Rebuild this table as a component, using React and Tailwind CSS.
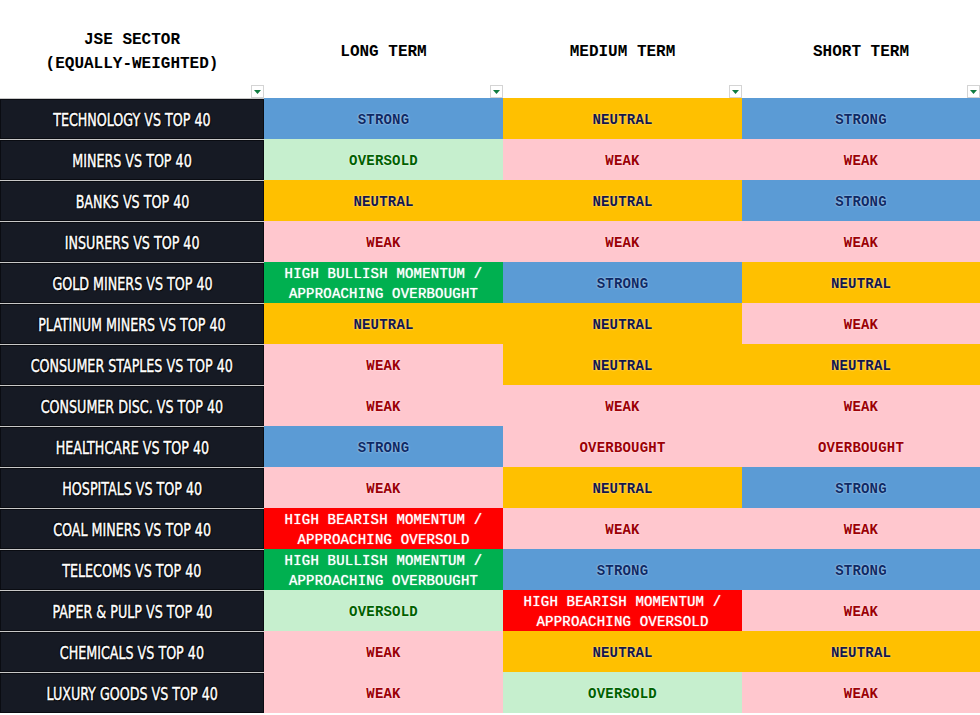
import React from 'react';

// Cell styles keyed by signal
const STYLES = {
  STRONG: 'bg-[#5b9bd5] text-[#0d2a66] font-bold [text-shadow:0_0_2px_rgba(255,255,255,0.7)]',
  NEUTRAL: 'bg-[#ffc000] text-[#15164a] font-bold [text-shadow:0_0_2px_rgba(255,255,255,0.7)]',
  WEAK: 'bg-[#ffc7ce] text-[#9c0006] font-bold [text-shadow:0_0_2px_rgba(255,255,255,0.8)]',
  OVERBOUGHT: 'bg-[#ffc7ce] text-[#9c0006] font-bold [text-shadow:0_0_2px_rgba(255,255,255,0.8)]',
  OVERSOLD: 'bg-[#c6efce] text-[#006100] font-bold [text-shadow:0_0_2px_rgba(255,255,255,0.8)]',
  BULL: 'bg-[#00b050] text-white font-normal [text-shadow:0_0_1px_rgba(255,255,255,0.9)]',
  BEAR: 'bg-[#ff0000] text-white font-normal [text-shadow:0_0_1px_rgba(255,255,255,0.9)]',
};

const LABELS = {
  BULL: ['HIGH BULLISH MOMENTUM /', 'APPROACHING OVERBOUGHT'],
  BEAR: ['HIGH BEARISH MOMENTUM /', 'APPROACHING OVERSOLD'],
};

const rows = [
  ['TECHNOLOGY VS TOP 40', 'STRONG', 'NEUTRAL', 'STRONG'],
  ['MINERS VS TOP 40', 'OVERSOLD', 'WEAK', 'WEAK'],
  ['BANKS VS TOP 40', 'NEUTRAL', 'NEUTRAL', 'STRONG'],
  ['INSURERS VS TOP 40', 'WEAK', 'WEAK', 'WEAK'],
  ['GOLD MINERS VS TOP 40', 'BULL', 'STRONG', 'NEUTRAL'],
  ['PLATINUM MINERS VS TOP 40', 'NEUTRAL', 'NEUTRAL', 'WEAK'],
  ['CONSUMER STAPLES VS TOP 40', 'WEAK', 'NEUTRAL', 'NEUTRAL'],
  ['CONSUMER DISC. VS TOP 40', 'WEAK', 'WEAK', 'WEAK'],
  ['HEALTHCARE VS TOP 40', 'STRONG', 'OVERBOUGHT', 'OVERBOUGHT'],
  ['HOSPITALS VS TOP 40', 'WEAK', 'NEUTRAL', 'STRONG'],
  ['COAL MINERS VS TOP 40', 'BEAR', 'WEAK', 'WEAK'],
  ['TELECOMS VS TOP 40', 'BULL', 'STRONG', 'STRONG'],
  ['PAPER & PULP VS TOP 40', 'OVERSOLD', 'BEAR', 'WEAK'],
  ['CHEMICALS VS TOP 40', 'WEAK', 'NEUTRAL', 'NEUTRAL'],
  ['LUXURY GOODS VS TOP 40', 'WEAK', 'OVERSOLD', 'WEAK'],
];

const mono = "font-['Liberation_Mono','DejaVu_Sans_Mono',monospace]";

const FilterButton = () => (
  <div className="absolute right-0 bottom-0 w-[13px] h-[13px] bg-white border border-[#d4d4d4] flex items-center justify-center">
    <svg width="7" height="4" viewBox="0 0 7 4">
      <polygon points="0,0 7,0 3.5,4" fill="#107c41" />
    </svg>
  </div>
);

const HeaderCell = ({ children }) => (
  <div className={`relative h-[98px] pt-[6px] flex items-center justify-center text-center text-[16px] leading-[24px] font-bold text-black ${mono}`}>
    {children}
    <FilterButton />
  </div>
);

const SignalCell = ({ value }) => {
  const lines = LABELS[value] || [value];
  return (
    <div className={`h-[41px] pt-[3px] flex flex-col items-center justify-center text-center text-[14px] leading-[20px] tracking-[0.2px] ${mono} ${STYLES[value]}`}>
      {lines.map((l) => (
        <span key={l} className="whitespace-pre">{l}</span>
      ))}
    </div>
  );
};

export default function App() {
  return (
    <div className="w-[980px] h-[715px] bg-white overflow-hidden">
      <div className="grid grid-cols-[264px_239px_239px_238px]">
        <HeaderCell>
          <div>
            JSE SECTOR
            <br />
            (EQUALLY-WEIGHTED)
          </div>
        </HeaderCell>
        <HeaderCell>LONG TERM</HeaderCell>
        <HeaderCell>MEDIUM TERM</HeaderCell>
        <HeaderCell>SHORT TERM</HeaderCell>

        {rows.map(([name, a, b, c]) => (
          <React.Fragment key={name}>
            <div className="h-[41px] border-t border-[#c8c8c8] bg-[#161a24]">
              <div className="h-full pt-[3px] border border-[#0a0c12] flex items-center justify-center">
                <span className="inline-block whitespace-nowrap scale-x-[0.83] text-white text-[17px] font-medium font-['Liberation_Sans_Narrow','DejaVu_Sans_Condensed',sans-serif] [-webkit-text-stroke:0.4px_#fff] [text-shadow:0_0_1px_#000,1px_1px_1px_#000,-1px_-1px_1px_#000]">
                  {name}
                </span>
              </div>
            </div>
            <SignalCell value={a} />
            <SignalCell value={b} />
            <SignalCell value={c} />
          </React.Fragment>
        ))}
      </div>
    </div>
  );
}
